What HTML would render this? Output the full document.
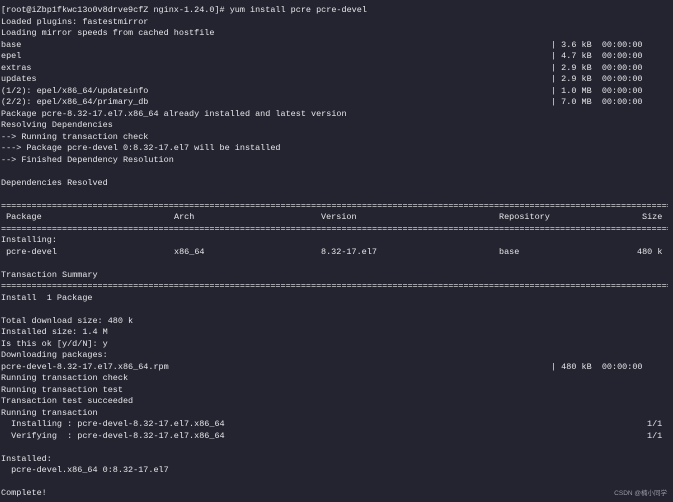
<!DOCTYPE html>
<html><head><meta charset="utf-8"><style>
html,body{margin:0;padding:0;background:#23242f;}
body{width:673px;height:500px;overflow:hidden;position:relative;font-family:"Liberation Mono",monospace;font-size:8.48px;color:#e6e6ea;}
#w{position:absolute;left:0;top:2px;width:673px;height:500px;}
.l{position:absolute;left:1px;height:11.5px;line-height:11.5px;white-space:pre;width:672px;}
.l span{position:absolute;top:0;}
.wm{position:absolute;right:6px;bottom:3px;font-family:"Liberation Sans","Noto Sans CJK SC",sans-serif;font-size:6.5px;color:#9a9aa5;}
</style></head><body><div id="w">
<div class="l" style="top:3px">[root@iZbp1fkwc13o0v8drve9cfZ nginx-1.24.0]# yum install pcre pcre-devel</div>
<div class="l" style="top:14.5px">Loaded plugins: fastestmirror</div>
<div class="l" style="top:26px">Loading mirror speeds from cached hostfile</div>
<div class="l" style="top:37.5px">base<span style="left:550px">| 3.6 kB  00:00:00</span></div>
<div class="l" style="top:49px">epel<span style="left:550px">| 4.7 kB  00:00:00</span></div>
<div class="l" style="top:60.5px">extras<span style="left:550px">| 2.9 kB  00:00:00</span></div>
<div class="l" style="top:72px">updates<span style="left:550px">| 2.9 kB  00:00:00</span></div>
<div class="l" style="top:83.5px">(1/2): epel/x86_64/updateinfo<span style="left:550px">| 1.0 MB  00:00:00</span></div>
<div class="l" style="top:95px">(2/2): epel/x86_64/primary_db<span style="left:550px">| 7.0 MB  00:00:00</span></div>
<div class="l" style="top:106.5px">Package pcre-8.32-17.el7.x86_64 already installed and latest version</div>
<div class="l" style="top:118px">Resolving Dependencies</div>
<div class="l" style="top:129.5px">--&gt; Running transaction check</div>
<div class="l" style="top:141px">---&gt; Package pcre-devel 0:8.32-17.el7 will be installed</div>
<div class="l" style="top:152.5px">--&gt; Finished Dependency Resolution</div>
<div class="l" style="top:175.5px">Dependencies Resolved</div>
<div class="l" style="top:198.5px;overflow:hidden;width:667px">=====================================================================================================================================</div>
<div class="l" style="top:210px"> Package<span style="left:173px">Arch</span><span style="left:320px">Version</span><span style="left:498px">Repository</span><span style="left:641px">Size</span></div>
<div class="l" style="top:221.5px;overflow:hidden;width:667px">=====================================================================================================================================</div>
<div class="l" style="top:233px">Installing:</div>
<div class="l" style="top:244.5px"> pcre-devel<span style="left:173px">x86_64</span><span style="left:320px">8.32-17.el7</span><span style="left:498px">base</span><span style="left:636px">480 k</span></div>
<div class="l" style="top:267.5px">Transaction Summary</div>
<div class="l" style="top:279px;overflow:hidden;width:667px">=====================================================================================================================================</div>
<div class="l" style="top:290.5px">Install  1 Package</div>
<div class="l" style="top:313.5px">Total download size: 480 k</div>
<div class="l" style="top:325px">Installed size: 1.4 M</div>
<div class="l" style="top:336.5px">Is this ok [y/d/N]: y</div>
<div class="l" style="top:348px">Downloading packages:</div>
<div class="l" style="top:359.5px">pcre-devel-8.32-17.el7.x86_64.rpm<span style="left:550px">| 480 kB  00:00:00</span></div>
<div class="l" style="top:371px">Running transaction check</div>
<div class="l" style="top:382.5px">Running transaction test</div>
<div class="l" style="top:394px">Transaction test succeeded</div>
<div class="l" style="top:405.5px">Running transaction</div>
<div class="l" style="top:417px">  Installing : pcre-devel-8.32-17.el7.x86_64<span style="left:646px">1/1</span></div>
<div class="l" style="top:428.5px">  Verifying  : pcre-devel-8.32-17.el7.x86_64<span style="left:646px">1/1</span></div>
<div class="l" style="top:451.5px">Installed:</div>
<div class="l" style="top:463px">  pcre-devel.x86_64 0:8.32-17.el7</div>
<div class="l" style="top:486px">Complete!</div>
</div>
<div class="wm">CSDN @楠小同学</div>
</body></html>
